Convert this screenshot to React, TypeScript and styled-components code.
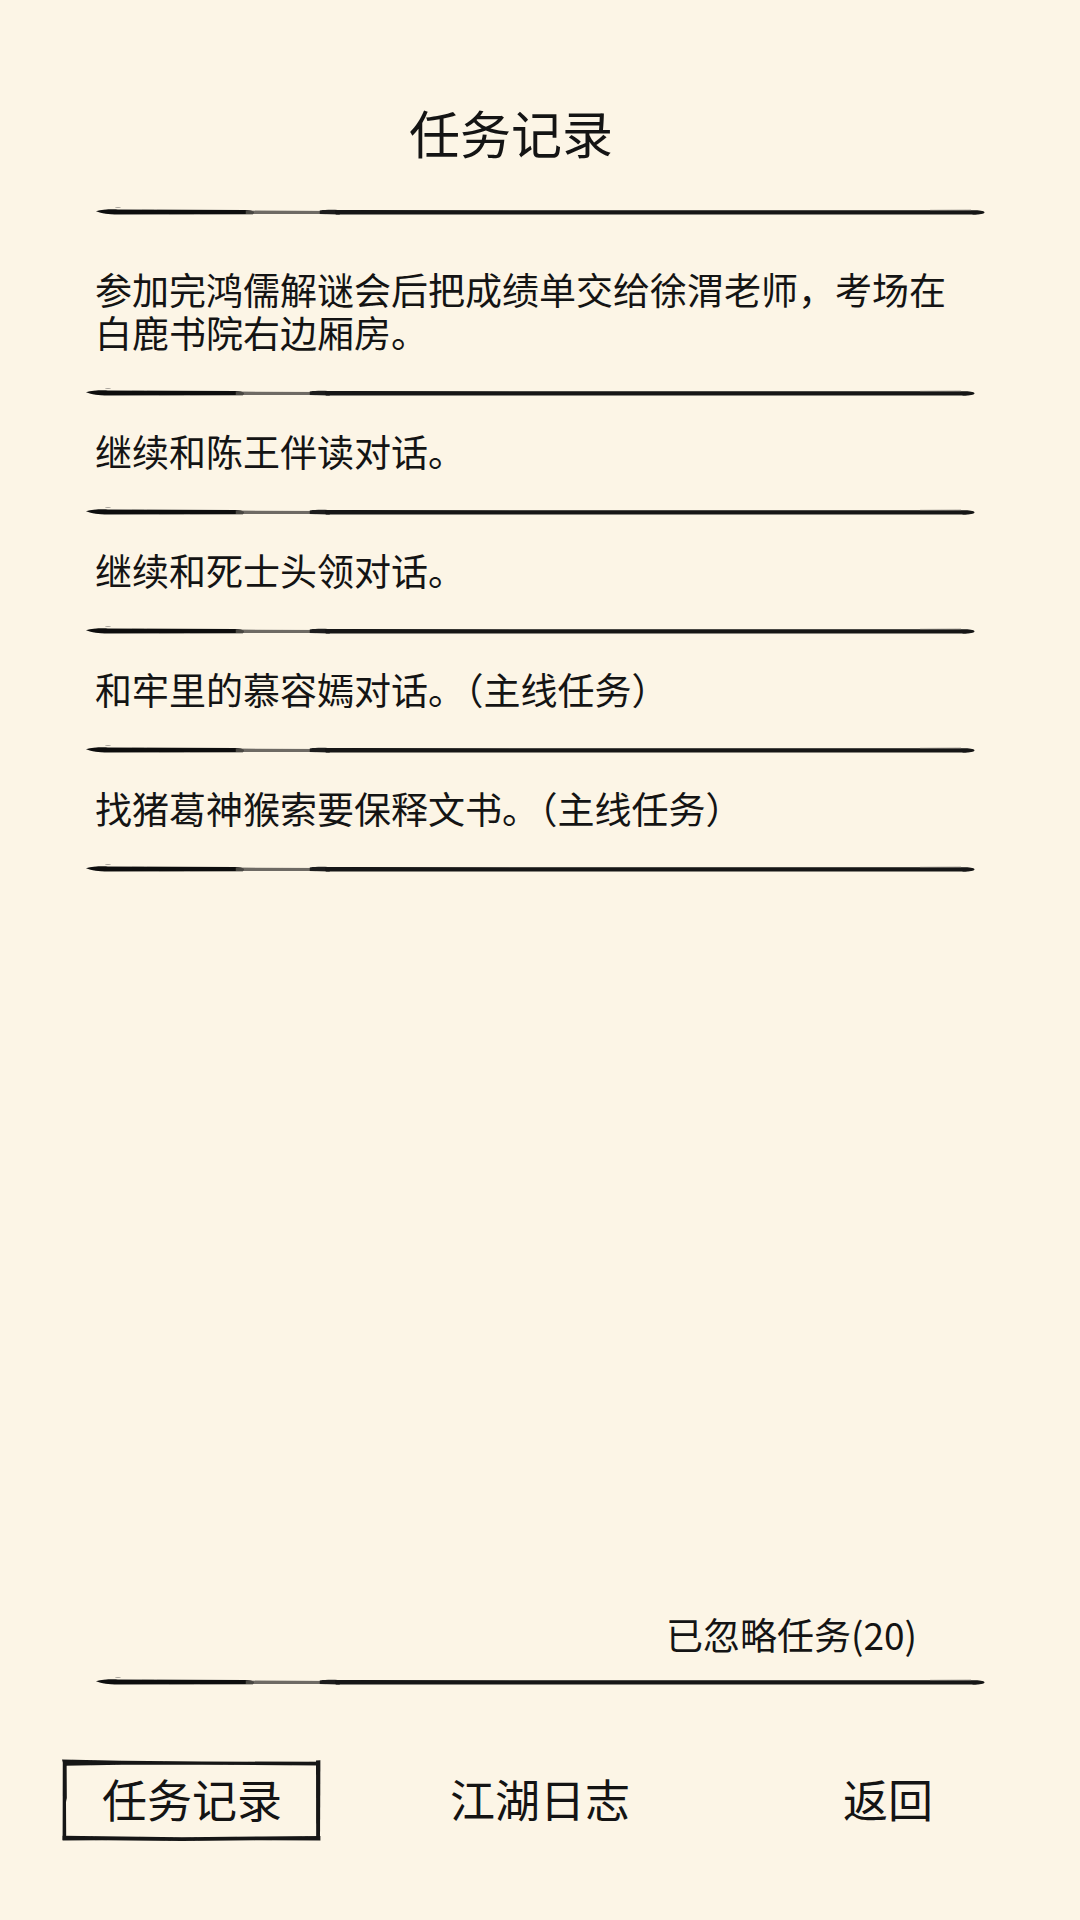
import React, { useId } from 'react';
import styled, { createGlobalStyle } from 'styled-components';

const GlobalStyle = createGlobalStyle`
  html, body {
    margin: 0;
    padding: 0;
    background: #fcf5e6;
  }
  body {
    font-family: "Noto Sans CJK SC", "Noto Sans", sans-serif;
    color: #141414;
  }
`;

const Page = styled.div`
  display: flex;
  flex-direction: column;
  min-height: 1920px;
  box-sizing: border-box;
  padding-bottom: 79px;
  background: #fcf5e6;
`;

const Header = styled.header`
  display: flex;
  flex-direction: column;
  padding-top: 102px;
`;

const Title = styled.h1`
  margin: 0;
  padding-right: 58px;
  font-size: 51px;
  line-height: 61px;
  font-weight: 400;
  text-align: center;
`;

const RuleSvg = styled.svg<{ $left: number; $top?: number }>`
  display: block;
  width: 889px;
  height: 10px;
  margin-left: ${p => p.$left}px;
  margin-top: ${p => p.$top ?? 0}px;
  overflow: visible;
`;

const TaskList = styled.ul`
  flex: 1;
  list-style: none;
  margin: 19px 0 0;
  padding: 0 0 0 86px;
`;

const TaskItem = styled.li`
  width: 889px;
`;

const TaskText = styled.p`
  margin: 0;
  padding: 32px 0 34px 9px;
  font-size: 37px;
  line-height: 43px;
`;

const Ignored = styled.div`
  padding-right: 163px;
  margin-bottom: 21px;
  text-align: right;
  font-size: 37px;
  line-height: 43px;
`;

const Tabs = styled.nav`
  display: grid;
  grid-template-columns: repeat(3, 1fr);
  padding: 0 18px;
  margin-top: 72px;
`;

const Tab = styled.button<{ $active?: boolean }>`
  position: relative;
  justify-self: center;
  display: flex;
  align-items: center;
  justify-content: center;
  width: 260px;
  height: 82px;
  padding: 0 0 4px;
  border: none;
  background: transparent;
  font-family: inherit;
  font-size: 45px;
  line-height: 45px;
  color: #141414;
  cursor: pointer;
`;

const Frame = styled.svg`
  position: absolute;
  inset: 0;
  width: 100%;
  height: 100%;
  pointer-events: none;
`;

const BrushRule: React.FC<{ left: number; top?: number }> = ({ left, top }) => {
  const id = useId().replace(/:/g, '');
  return (
    <RuleSvg $left={left} $top={top} viewBox="0 0 890 10" preserveAspectRatio="none">
      <defs>
        <filter id={`b${id}`} x="-1%" y="-50%" width="102%" height="200%">
          <feGaussianBlur stdDeviation="0.4" />
        </filter>
      </defs>
      <g filter={`url(#b${id})`}>
        <ellipse cx="22" cy="0.4" rx="3" ry="0.5" fill="#a8a49c" />
        <path d="M0 4.2 C6 2.6 12 2.2 22 2.4 L150 2.9 C158 3.4 160 5 157 7.2 L22 7.4 C12 7.4 6 6.6 0 4.2 Z" fill="#111" />
        <path d="M150 3.6 L240 3.9 L240 7.0 L150 6.9 Z" fill="#55514c" opacity="0.85" />
        <path d="M224 3.4 C232 2.6 238 2.8 244 3.2 L244 7.4 L224 7.0 Z" fill="#1e1e1e" />
        <path d="M240 3.1 L878 3.3 C886 3.0 890 4.4 889.5 5.4 C889 6.8 884 7.8 876 7.6 L240 7.5 Z" fill="#121212" />
        <path d="M835 2.8 L876 2.5 L876 3.8 L835 4.0 Z" fill="#6f6b66" opacity="0.55" />
      </g>
    </RuleSvg>
  );
};

const ActiveFrame: React.FC = () => {
  const id = useId().replace(/:/g, '');
  return (
    <Frame viewBox="0 0 260 84" preserveAspectRatio="none">
      <defs>
        <filter id={`f${id}`}>
          <feGaussianBlur stdDeviation="0.4" />
        </filter>
      </defs>
      <g filter={`url(#f${id})`} fill="#141414">
        <path d="M0 0.6 L60 1.8 L140 2.6 L258 2.8 L258 6.6 L140 5.8 L60 5.8 L2 7 Z" />
        <path d="M0.8 1.2 L4.6 1.2 L4.8 40 L4 44 L4.2 83 L0.6 83 Z" />
        <path d="M254 1.6 L258.4 1.4 L258 82 L254.2 82 Z" />
        <path d="M0.6 78.6 L40 79.2 L120 80.2 L200 79.4 L258.4 79 L258.4 83.6 L200 83.2 L120 84 L40 83.2 L0.6 83.4 Z" />
      </g>
    </Frame>
  );
};

const tasks = [
  '参加完鸿儒解谜会后把成绩单交给徐渭老师，考场在白鹿书院右边厢房。',
  '继续和陈王伴读对话。',
  '继续和死士头领对话。',
  '和牢里的慕容嫣对话。（主线任务）',
  '找猪葛神猴索要保释文书。（主线任务）',
];

const tabs = ['任务记录', '江湖日志', '返回'];

export default function App() {
  return (
    <>
      <GlobalStyle />
      <Page>
        <Header>
          <Title>任务记录</Title>
          <BrushRule left={96} top={44} />
        </Header>

        <TaskList>
          {tasks.map(task => (
            <TaskItem key={task}>
              <TaskText>{task}</TaskText>
              <BrushRule left={0} />
            </TaskItem>
          ))}
        </TaskList>

        <Ignored>已忽略任务(20)</Ignored>
        <BrushRule left={96} />

        <Tabs>
          {tabs.map((label, i) => (
            <Tab key={label} $active={i === 0}>
              {i === 0 && <ActiveFrame />}
              {label}
            </Tab>
          ))}
        </Tabs>
      </Page>
    </>
  );
}
